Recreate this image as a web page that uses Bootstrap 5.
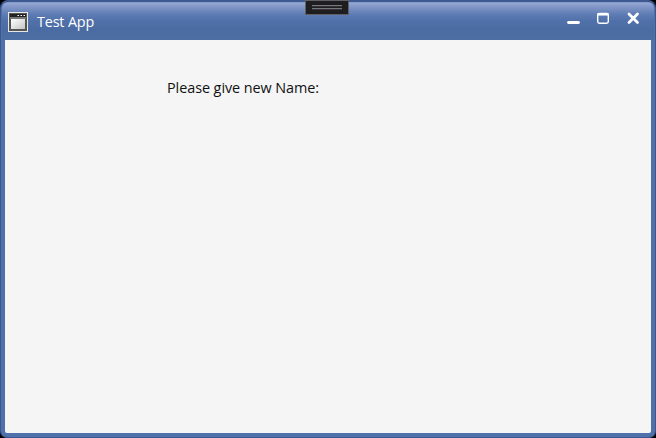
<!DOCTYPE html>
<html lang="en">
<head>
<meta charset="utf-8">
<meta name="viewport" content="width=device-width, initial-scale=1">
<title>Test App</title>
<link rel="stylesheet" href="https://cdn.jsdelivr.net/npm/bootstrap@5.3.0/dist/css/bootstrap.min.css">
<style>
body { background: #000; font-family: "Open Sans", "Noto Sans", sans-serif; height: 100vh; }
.app-window { background: #4f70a9; border: 1px solid #3c5790; border-top: 2px solid #3f5a92; border-radius: 8px 8px 7px 7px; padding: 0 4px 4px; }
.title-strip { height: 38px; margin: 0 -3px; padding: 1px 6px 0 6px; background: linear-gradient(#6f8fc4 0, #96a8d3 1px, #8699ca 4px, #738bbf 8px, #5f7db5 12px, #4f70a9 19px, #4b6ca2 28px, #4c6ea3 38px); border-radius: 6px 6px 0 0; }
.app-title { color: #fff; font-size: 14.4px; line-height: 20px; letter-spacing: -.17px; margin-left: 9px; }
.client { background: #f5f5f5; border-radius: 0 0 2px 2px; padding: 38px 0 0 162px; }
.prompt { color: #111; font-size: 14.4px; line-height: 20px; letter-spacing: -.06px; }
.win-btn { width: 30px; height: 20px; background: none; }
.controls { padding-top: 3px; }
.debug-handle { left: 305px; top: 0; width: 44px; height: 15px; background: #1e1e20; border: 1px solid #606064; }
</style>
<script src="https://cdn.jsdelivr.net/npm/bootstrap@5.3.0/dist/js/bootstrap.bundle.min.js"></script>
</head>
<body class="m-0 overflow-hidden">
<main class="app-window h-100 d-flex flex-column">
  <header class="title-strip d-flex flex-shrink-0 align-items-center">
    <svg width="20" height="20" viewBox="0 0 20 20" aria-hidden="true">
      <defs><linearGradient id="pane" x2="1" y2="1"><stop stop-color="#fff"/><stop offset="1" stop-color="#c4c4c4"/></linearGradient></defs>
      <path fill="#e8e8e8" d="M0 0h20v20H0z"/>
      <path fill="#555" d="M1 1h18v18H1z"/>
      <path fill="#222" d="M2 2h16v3H2z"/>
      <path fill="#999" d="M2 5.500h16v1H2z"/>
      <path fill="url(#pane)" d="M3 7h14v10H3z"/>
      <path fill="#fff" d="M9.500 3h1.500v1h-1.500zM12.500 3h1.500v1h-1.500zM15.500 3h1.500v1h-1.500z"/>
    </svg>
    <span class="app-title">Test App</span>
    <div class="controls ms-auto d-flex align-self-start">
      <button class="win-btn border-0 p-0 d-flex" aria-label="Minimize"><svg width="30" height="26" viewBox="0 0 30 26"><path d="M10.500 16.500h10" stroke="#fff" stroke-width="2.800" stroke-linecap="round"/></svg></button>
      <button class="win-btn border-0 p-0 d-flex" aria-label="Maximize"><svg width="30" height="26" viewBox="0 0 30 26"><rect x="9.700" y="7.500" width="10.600" height="9.800" rx="1.700" fill="none" stroke="#fff" stroke-width="1.400"/><path d="M9.500 8.300h11" stroke="#fff" stroke-width="2.500"/></svg></button>
      <button class="win-btn border-0 p-0 d-flex" aria-label="Close"><svg width="30" height="26" viewBox="0 0 30 26"><path d="M11 8l8.500 8.500M19.500 8L11 16.500" stroke="#fff" stroke-width="2.800" stroke-linecap="round"/></svg></button>
    </div>
  </header>
  <section class="client flex-grow-1"><label class="prompt d-block">Please give new Name:</label></section>
</main>
<div class="debug-handle position-absolute d-flex justify-content-center align-items-center">
  <svg width="30" height="5" viewBox="0 0 30 5" aria-hidden="true"><path fill="#77777b" d="M0 0h30v1.300H0zM0 3h30v1.300H0z"/></svg>
</div>
</body>
</html>
